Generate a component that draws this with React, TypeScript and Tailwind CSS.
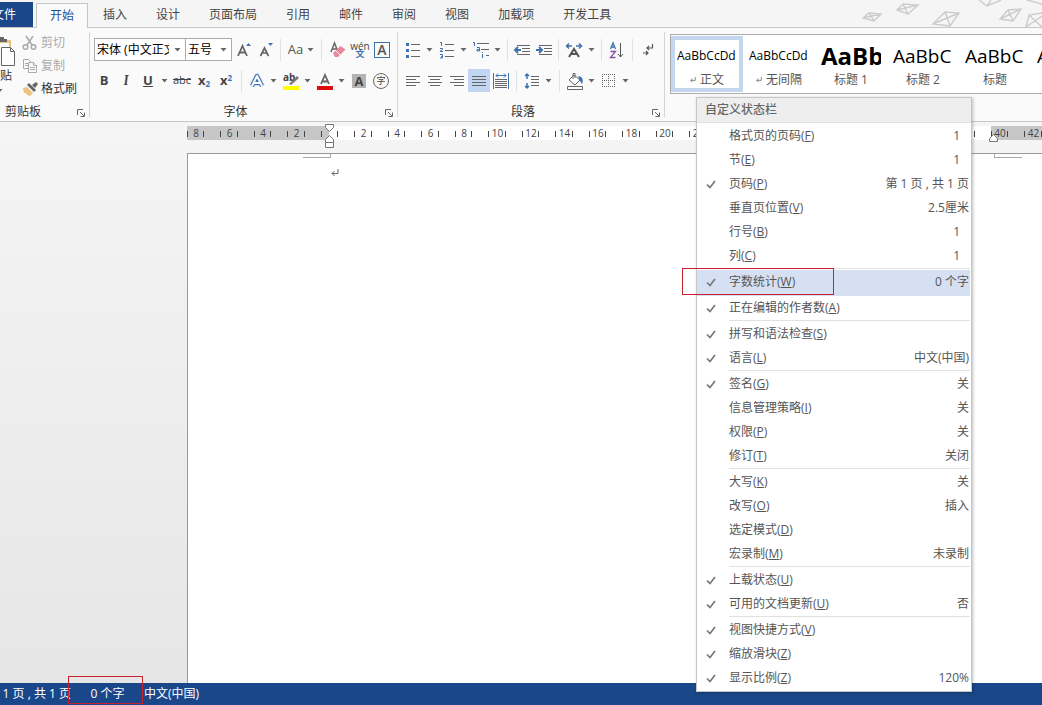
import type { ReactNode } from "react"

const TABS = ["插入", "设计", "页面布局", "引用", "邮件", "审阅", "视图", "加载项", "开发工具"]

type MenuEntry = {
  label: string
  accel: string
  value?: string
  checked?: boolean
  active?: boolean
  divider?: boolean
}

const MENU: MenuEntry[] = [
  { label: "格式页的页码", accel: "F", value: "1" },
  { label: "节", accel: "E", value: "1" },
  { label: "页码", accel: "P", value: "第 1 页 , 共 1 页", checked: true },
  { label: "垂直页位置", accel: "V", value: "2.5厘米" },
  { label: "行号", accel: "B", value: "1" },
  { label: "列", accel: "C", value: "1", divider: true },
  { label: "字数统计", accel: "W", value: "0 个字", checked: true, active: true },
  { label: "正在编辑的作者数", accel: "A", checked: true, divider: true },
  { label: "拼写和语法检查", accel: "S", checked: true },
  { label: "语言", accel: "L", value: "中文(中国)", checked: true, divider: true },
  { label: "签名", accel: "G", value: "关", checked: true },
  { label: "信息管理策略", accel: "I", value: "关" },
  { label: "权限", accel: "P", value: "关" },
  { label: "修订", accel: "T", value: "关闭", divider: true },
  { label: "大写", accel: "K", value: "关" },
  { label: "改写", accel: "O", value: "插入" },
  { label: "选定模式", accel: "D" },
  { label: "宏录制", accel: "M", value: "未录制", divider: true },
  { label: "上载状态", accel: "U", checked: true },
  { label: "可用的文档更新", accel: "U", value: "否", checked: true, divider: true },
  { label: "视图快捷方式", accel: "V", checked: true },
  { label: "缩放滑块", accel: "Z", checked: true },
  { label: "显示比例", accel: "Z", value: "120%", checked: true },
]

const STYLES = [
  { sample: "AaBbCcDd", name: "正文", mark: true, size: "text-[12px]", active: true },
  { sample: "AaBbCcDd", name: "无间隔", mark: true, size: "text-[12px]" },
  { sample: "AaBbCc", name: "标题 1", size: "text-[24px] font-bold" },
  { sample: "AaBbC", name: "标题 2", size: "text-[19px]" },
  { sample: "AaBbC", name: "标题", size: "text-[19px]" },
  { sample: "AaBbC", name: "副标题", size: "text-[19px]" },
]

function Btn({ label, wide, on, children }: { label: string; wide?: boolean; on?: boolean; children: ReactNode }) {
  return (
    <button
      aria-label={label}
      className={`flex h-[23px] shrink-0 items-center justify-center ${wide ? "w-6" : "w-[22px]"} ${on ? "bg-[#c2d5f2]" : ""}`}
    >
      {children}
    </button>
  )
}

function Caret() {
  return (
    <svg width="7" height="4" viewBox="0 0 7 4" fill="#666" aria-hidden="true">
      <path d="M0.5 0h6L3.500 3.500z" />
    </svg>
  )
}

function Drop({ label }: { label: string }) {
  return (
    <button aria-label={label} className="flex h-[23px] w-3 shrink-0 items-center pl-[2px]">
      <Caret />
    </button>
  )
}

function Sep({ wide }: { wide?: boolean }) {
  return <div className={`h-[22px] w-px shrink-0 bg-[#e1e1e1] ${wide ? "mx-1" : "mx-[3px]"}`} />
}

function Launcher({ label }: { label: string }) {
  return (
    <button aria-label={label} className="absolute right-1 bottom-0">
      <svg width="8" height="8" viewBox="0 0 8 8" fill="none" stroke="#666">
        <path d="M0.5 6V0.5H6M3 3l4 4M7.500 3.500v4h-4" />
      </svg>
    </button>
  )
}

function Group({ title, className, children }: { title: string; className: string; children: ReactNode }) {
  return (
    <section aria-label={title} className={`relative my-1 flex shrink-0 flex-col border-r border-[#d4d4d4] pt-[6px] ${className}`}>
      {children}
      <div className="absolute inset-x-0 -bottom-[2px] pr-4 text-center leading-[14px] text-[#333]">{title}</div>
      <Launcher label={title + "选项"} />
    </section>
  )
}

function Lines({ rows }: { rows: [number, number][] }) {
  return (
    <svg width="16" height="16" viewBox="0 0 16 16" stroke="#666">
      {rows.map(([from, to], i) => (
        <path key={i} d={`M${from} ${3.5 + i * 3}H${to}`} />
      ))}
    </svg>
  )
}

function Clipboard() {
  return (
    <section aria-label="剪贴板" className="relative my-1 w-[90px] shrink-0 border-r border-[#d4d4d4]">
      <div className="flex">
        <button className="flex w-[22px] flex-col items-start pt-[3px]">
          <svg width="16" height="32" viewBox="0 0 16 32" fill="none">
            <path d="M0 5h11v7H9V8H0z" fill="#eac282" />
            <path d="M0 2h4v2h3v3H0z" fill="#666" />
            <path d="M1.500 12.500h9l4 4v14h-13z" fill="#fff" stroke="#666" />
            <path d="M10.500 12.500v4h4" stroke="#666" />
          </svg>
          <span className="mb-1 leading-[18px] text-[#333]">贴</span>
          <span className="-ml-1 flex"><Caret /></span>
        </button>
        <div className="-mt-px flex flex-col text-[#aaa]">
          <button className="flex h-[23px] items-center gap-[3px]">
            <svg width="16" height="16" viewBox="0 0 16 16" fill="none" stroke="#aaa" strokeWidth="1.500">
              <path d="M4 1l6 9M11 1L5 10" />
              <circle cx="3.500" cy="12" r="2.300" />
              <circle cx="11.500" cy="12" r="2.300" />
            </svg>
            剪切
          </button>
          <button className="flex h-[23px] items-center gap-[3px]">
            <svg width="16" height="16" viewBox="0 0 16 16" fill="#fafafa" stroke="#aaa">
              <path d="M1.500 1.500h5l2 2v7h-7zM3 5.500h3M3 7.500h3" />
              <path d="M6.500 4.500h5l3 3v7h-8z" />
              <path d="M11.500 4.500v3h3M8 9.500h5M8 11.500h5" />
            </svg>
            复制
          </button>
          <button className="flex h-[23px] items-center gap-[3px] text-[#333]">
            <svg width="16" height="16" viewBox="0 0 16 16">
              <path d="M1 7l4-1 6 6-3 3-3-1-1-2-2 0z" fill="#eac282" />
              <path d="M5 4l2-2 7 7-2 2z" fill="#666" />
              <path d="M10 4l4-3 2 2-3 4z" fill="#666" />
            </svg>
            格式刷
          </button>
        </div>
      </div>
      <div className="absolute -bottom-[2px] left-[5px] leading-[14px] text-[#333]">剪贴板</div>
      <Launcher label="剪贴板选项" />
    </section>
  )
}

function Combo({ label, value, className }: { label: string; value: string; className: string }) {
  return (
    <div className={`relative h-[23px] shrink-0 border border-[#ababab] bg-white ${className}`}>
      <select aria-label={label} className="h-full w-full appearance-none overflow-hidden pt-px pr-4 pl-[2px] text-[12px] text-black outline-none">
        <option>{value}</option>
      </select>
      <div className="pointer-events-none absolute top-[9px] right-1 flex">
        <Caret />
      </div>
    </div>
  )
}

function FontGroup() {
  return (
    <Group title="字体" className="w-[308px] pl-[3px]">
      <div className="flex h-[23px] items-center pl-px">
        <Combo label="字体" value="宋体 (中文正文)" className="w-[92px]" />
        <Combo label="字号" value="五号" className="-ml-px w-[47px]" />
        <div className="w-px" />
        <Btn label="增大字号">
          <svg width="18" height="18" viewBox="0 0 18 18" fill="none" stroke="#666" strokeWidth="1.800">
            <path d="M3 15L7.500 5 12 15M4.500 11.500h6" />
            <path d="M11 5l2.500-3L16 5z" fill="#4472b0" stroke="none" />
          </svg>
        </Btn>
        <Btn label="减小字号">
          <svg width="18" height="18" viewBox="0 0 18 18" fill="none" stroke="#666" strokeWidth="1.700">
            <path d="M3.500 15L7.500 7l4 8M5 12h5" />
            <path d="M11 2h5l-2.500 3z" fill="#4472b0" stroke="none" />
          </svg>
        </Btn>
        <Sep />
        <button aria-label="更改大小写" className="flex h-[23px] w-[34px] items-center justify-center gap-1 text-[13px] text-[#555]">
          Aa <Caret />
        </button>
        <Sep />
        <div className="w-[2px]" />
        <Btn label="清除格式">
          <svg width="18" height="18" viewBox="0 0 18 18" fill="none">
            <path d="M2 11L5.500 2 9 11M3.500 8h4" stroke="#666" strokeWidth="1.500" />
            <path d="M4 12l7.500-7 5 3.500-7.500 7.500H6z" fill="#e8879c" />
            <path d="M6.500 9.500l4.500 4.500" stroke="#fafafa" />
          </svg>
        </Btn>
        <Btn label="拼音指南">
          <span className="flex flex-col items-center text-[10px] leading-[8px] text-[#444]">
            <span>wén</span>
            <span className="text-[9px] font-bold text-[#3d72ad]">文</span>
          </span>
        </Btn>
        <Btn label="字符边框">
          <span className="flex h-4 w-4 items-center justify-center border border-[#3d72ad] text-[14px] leading-[14px] font-semibold text-[#555]">A</span>
        </Btn>
      </div>
      <div className="mt-2 flex h-[23px] items-center text-[13px] text-[#444]">
        <Btn label="加粗"><b>B</b></Btn>
        <Btn label="倾斜"><b className="font-serif italic">I</b></Btn>
        <Btn label="下划线"><b className="underline">U</b></Btn>
        <Drop label="下划线样式" />
        <Btn label="删除线"><span className="text-[11px] line-through">abc</span></Btn>
        <Btn label="下标"><b>x<sub className="text-[8px] text-[#3d72ad]">2</sub></b></Btn>
        <Btn label="上标"><b>x<sup className="text-[8px] text-[#3d72ad]">2</sup></b></Btn>
        <Sep wide />
        <Btn label="文本效果">
          <svg width="18" height="18" viewBox="0 0 18 18" fill="none" strokeLinejoin="round">
            <path d="M4 14L9 4l5 10M6 11h6" stroke="#cfe0f4" strokeWidth="6" />
            <path d="M4 14L9 4l5 10M6 11h6" stroke="#3d72ad" strokeWidth="4" />
            <path d="M4 14L9 4l5 10M6 11h6" stroke="#fff" strokeWidth="2" />
          </svg>
        </Btn>
        <Drop label="文本效果选项" />
        <Btn label="突出显示">
          <svg width="18" height="18" viewBox="0 0 18 18" fill="none">
            <text x="1" y="9" fontSize="10" fontWeight="bold" fill="#444">ab</text>
            <path d="M7 12l8-8 2 2-8 7z" fill="#777" />
            <path d="M1 14h16v4H1z" fill="#ffff00" />
          </svg>
        </Btn>
        <Drop label="突出显示颜色" />
        <Btn label="字体颜色">
          <svg width="18" height="18" viewBox="0 0 18 18" fill="none">
            <path d="M5 12L9 3l4 9M6 9.500h6" stroke="#666" strokeWidth="1.800" />
            <path d="M1 14h16v4H1z" fill="#e20b0b" />
          </svg>
        </Btn>
        <Drop label="字体颜色选项" />
        <Btn label="字符底纹">
          <b className="flex h-[14px] w-[14px] items-center justify-center bg-[#b3b3b3] leading-[14px]">A</b>
        </Btn>
        <Btn label="带圈字符">
          <span className="flex h-4 w-4 items-center justify-center rounded-full border border-[#666] text-[9px] leading-none">字</span>
        </Btn>
      </div>
    </Group>
  )
}

function ParagraphGroup() {
  return (
    <Group title="段落" className="w-[267px] pl-1">
      <div className="flex h-[23px] items-center">
        <Btn label="项目符号">
          <svg width="16" height="18" viewBox="0 0 16 18" stroke="#666">
            <path d="M6 3.500h9M6 9.500h9M6 15.500h9" />
            <path d="M1 2h3v3H1zM1 8h3v3H1zM1 14h3v3H1z" fill="#3d72ad" stroke="none" />
          </svg>
        </Btn>
        <Drop label="项目符号库" />
        <Btn label="编号">
          <svg width="16" height="18" viewBox="0 0 16 18" stroke="#666">
            <path d="M6 3.500h9M6 9.500h9M6 15.500h9" />
            <path d="M1 1.500h1.500V5M1 7.500h2.500v1L1 10.500h3M1 13.500h2.500V17H1M2 15.500h1.500" fill="none" stroke="#3d72ad" />
          </svg>
        </Btn>
        <Drop label="编号库" />
        <Btn label="多级列表">
          <svg width="18" height="18" viewBox="0 0 18 18" stroke="#666" fill="none">
            <path d="M5 2.500h12M9 8.500h8M14 14.500h3" />
            <path d="M1 1.500h1.500V5M5 6.500h2.500V10H5V8.500h2M10.500 11v1M10.500 13v4" stroke="#3d72ad" />
          </svg>
        </Btn>
        <Drop label="多级列表库" />
        <Sep />
        <Btn label="减少缩进量">
          <svg width="18" height="16" viewBox="0 0 18 16" stroke="#666" fill="none">
            <path d="M4 3.500h13M9 6.500h8M9 9.500h8M4 12.500h13" />
            <path d="M2 8h6M5 5L2 8l3 3" stroke="#3d72ad" strokeWidth="2" />
          </svg>
        </Btn>
        <Btn label="增加缩进量">
          <svg width="18" height="16" viewBox="0 0 18 16" stroke="#666" fill="none">
            <path d="M4 3.500h13M9 6.500h8M9 9.500h8M4 12.500h13" />
            <path d="M1 8h6M4 5l3 3-3 3" stroke="#3d72ad" strokeWidth="2" />
          </svg>
        </Btn>
        <Sep />
        <Btn label="中文版式" wide>
          <svg width="18" height="16" viewBox="0 0 18 16" fill="none">
            <path d="M4 15l5-8 5 8M6 12h6" stroke="#555" strokeWidth="2" />
            <path d="M7 4H2M4 1.500L1.500 4 4 6.500M11 4h5M14 1.500L16.500 4 14 6.500" stroke="#3d72ad" strokeWidth="1.500" />
          </svg>
        </Btn>
        <Drop label="中文版式选项" />
        <Sep />
        <Btn label="排序" wide>
          <svg width="16" height="18" viewBox="0 0 16 18" fill="none">
            <path d="M1.500 8L4 2l2.500 6M2.500 6h3" stroke="#3d72ad" strokeWidth="1.300" />
            <path d="M1.500 10.500h5l-5 6h5" stroke="#8a4fa8" strokeWidth="1.300" />
            <path d="M11.500 2v14M9 13l2.500 3 2.500-3" stroke="#555" />
          </svg>
        </Btn>
        <Sep />
        <Btn label="显示编辑标记" wide>
          <svg width="14" height="16" viewBox="0 0 14 16" fill="none" stroke="#555" strokeWidth="1.200">
            <path d="M11.500 2v4H6M8 4L6 6l2 2M2 11h5M5 9l2 2-2 2" />
          </svg>
        </Btn>
      </div>
      <div className="mt-2 flex h-[23px] items-center">
        <Btn label="左对齐"><Lines rows={[[1, 15], [1, 11], [1, 15], [1, 11]]} /></Btn>
        <Btn label="居中"><Lines rows={[[1, 15], [3, 13], [1, 15], [3, 13]]} /></Btn>
        <Btn label="右对齐"><Lines rows={[[1, 15], [5, 15], [1, 15], [5, 15]]} /></Btn>
        <Btn label="两端对齐" on><Lines rows={[[1, 15], [1, 15], [1, 15], [1, 15]]} /></Btn>
        <Btn label="分散对齐">
          <svg width="16" height="18" viewBox="0 0 16 18" fill="none" stroke="#666">
            <path d="M2 7.500h12M2 9.500h12M2 11.500h12M2 13.500h12M2 15.500h12" />
            <path d="M0.500 1v16M15.500 1v16M3 3.500h10M5 1.500l-2 2 2 2M11 1.500l2 2-2 2" stroke="#3d72ad" />
          </svg>
        </Btn>
        <Sep wide />
        <Btn label="行距">
          <svg width="16" height="18" viewBox="0 0 16 18" fill="none" stroke="#666">
            <path d="M7 4.500h8M7 7.500h8M7 10.500h8M7 13.500h8" />
            <path d="M3 2v5M1 4l2-2 2 2M3 11v5M1 14l2 2 2-2" stroke="#3d72ad" strokeWidth="1.500" />
          </svg>
        </Btn>
        <Drop label="行距选项" />
        <Sep wide />
        <Btn label="底纹">
          <svg width="18" height="18" viewBox="0 0 18 18" fill="none" stroke="#666">
            <path d="M8 3l6 5-5 5-6-5zM7 7V1.500h2V6" fill="#fff" />
            <path d="M12 4c4 0 6 4 4 8l-2-3z" fill="#3d72ad" stroke="none" />
            <path d="M1.500 14.500h15v3h-15z" fill="#fff" />
          </svg>
        </Btn>
        <Drop label="底纹颜色" />
        <Btn label="边框">
          <svg width="14" height="14" viewBox="0 0 14 14" fill="none" stroke="#666">
            <path d="M0 0.500h13M0 6.500h13M0 12.500h13M0.500 0v13M6.500 0v13M12.500 0v13" strokeDasharray="1 1" />
          </svg>
        </Btn>
        <Drop label="边框选项" />
      </div>
    </Group>
  )
}

function StyleGallery() {
  return (
    <section aria-label="样式" className="min-w-0 flex-1 pt-[6px] pl-[5px]">
      <div className="flex h-[60px] overflow-hidden border border-r-0 border-[#ababab] bg-white">
        {STYLES.map((s, i) => (
          <button
            key={i}
            className={`my-px flex w-[72px] shrink-0 flex-col items-center border-4 ${s.active ? "border-[#c5d6f0]" : "border-transparent"}`}
          >
            <span className={`flex h-8 w-[60px] shrink-0 items-center overflow-hidden leading-8 whitespace-nowrap text-black ${s.size}`}>
              {s.sample}
            </span>
            <span className="flex items-center gap-1 leading-[16px] whitespace-nowrap text-[#555]">
              {s.mark && <ReturnMark small />}
              {s.name}
            </span>
          </button>
        ))}
      </div>
    </section>
  )
}

function ReturnMark({ small }: { small?: boolean }) {
  return (
    <svg width={small ? 6 : 8} height={small ? 6 : 8} viewBox="0 0 8 8" fill="none" stroke="#666" aria-hidden="true">
      <path d="M7 0v4.500H1M3.500 2L1 4.500 3.500 7" />
    </svg>
  )
}

// One character unit is 16.75px; numbers sit on the even units, ticks on the halves
function Ruler() {
  const unit = 16.75
  const origin = 142
  const cells = Array.from({ length: 60 }, (_, i) => i - 8)
  return (
    <div className="relative ml-[187px] flex h-[14px]">
      <div className="w-[142px] bg-[#c6c6c6]" />
      <div className="w-[662px] bg-white" />
      <div className="flex-1 bg-[#c6c6c6]" />
      <svg className="absolute inset-0 h-full w-full" fontSize="10" fill="#444" textAnchor="middle">
        {cells.map(n => (
          <g key={n}>
            <path d={`M${Math.round(origin + (n - 0.5) * unit) + 0.5} 5v6`} stroke="#444" />
            {n !== 0 && n % 2 === 0 && (
              <text x={origin + 1 + n * unit} y="11">{Math.abs(n)}</text>
            )}
          </g>
        ))}
      </svg>
      <svg className="absolute -top-[2px] left-[137px]" width="11" height="25" viewBox="0 0 11 25" fill="#fff" stroke="#777">
        <path d="M1.500 0.500h8v3l-4 4-4-4zM5.500 11.500l4 4v3h-8v-3zM1.500 18.500h8v5h-8z" />
      </svg>
      <svg className="absolute top-[8px] left-[801px]" width="11" height="9" viewBox="0 0 11 9" fill="#fff" stroke="#777">
        <path d="M5.500 0.500l4 4v3h-8v-3z" />
      </svg>
    </div>
  )
}

function StatusMenu() {
  return (
    <div role="menu" className="absolute right-[70px] bottom-[13px] w-[276px] border border-[#c6c6c6] bg-white pb-px text-[#555] shadow-[1px_1px_3px_rgba(0,0,0,0.25)]">
      <div className="mb-px h-[25px] border-b border-[#e1e1e1] bg-[#eee] pl-2 leading-6 font-medium text-[#666]">自定义状态栏</div>
      {MENU.map(item => (
        <div key={item.label} className={item.active ? "relative mr-px bg-[#d5e1f2] pb-[2px]" : "mr-px"}>
          <button role="menuitemcheckbox" aria-checked={!!item.checked} className="flex h-6 w-full items-center pr-px">
            <span className="flex w-8 shrink-0 pl-[9px]">
              {item.checked && (
                <svg width="10" height="9" viewBox="0 0 10 9" fill="none" stroke="#777" strokeWidth="1.700">
                  <path d="M1 4.500l3 3L9 1" />
                </svg>
              )}
            </span>
            <span className="flex-1 text-left">
              {item.label}(<u>{item.accel}</u>)
            </span>
            <span className={item.value === "1" ? "pr-[9px]" : ""}>{item.value}</span>
          </button>
          {item.divider && <div className="ml-8 h-[2px] border-t border-[#e1e1e1]" />}
          {item.active && <div className="absolute -top-[2px] -left-[15px] h-[27px] w-[152px] border border-[#c8202f]" />}
        </div>
      ))}
    </div>
  )
}

export default function App() {
  return (
    <div className="relative flex h-screen flex-col overflow-hidden bg-[#f5f5f5] font-['Open_Sans','Noto_Sans_CJK_SC',sans-serif] text-[12px] text-[#444]">
      <nav className="relative flex h-7 shrink-0 items-end gap-px border-b border-[#c6c6c6]">
        <svg className="absolute right-0 bottom-0" width="187" height="27" viewBox="0 0 187 27" fill="none" stroke="#ccc" strokeWidth="1.400">
          <path d="M8 18l6-5 12 1-7 7zM8 18l18-4M14 13l5 8M42 10l6-6 15 1-10 9zM42 10l21-5M48 4l5 10M78 24l12-12 14 1-9 13zM78 24l26-11M90 12l5 14M124 0l8 6 14-6M132 6l4-6M145 19l8-9 13-1-8 12zM145 19l21-10M153 10l5 11M171 27l3-12 13-2M174 15l13 12M171 27l16-11M172 0l15 4" />
        </svg>
        <button className="relative flex h-[25px] w-[33px] items-center justify-end overflow-hidden bg-[#1a4789] pr-[17px] whitespace-nowrap text-white">
          文件
        </button>
        <button className="relative -mb-px ml-[2px] h-[25px] border border-b-0 border-[#c6c6c6] bg-[#fafafa] px-[13px] text-[#1f4f96]">开始</button>
        {TABS.map(tab => (
          <button key={tab} className="relative h-[25px] px-[14px]">{tab}</button>
        ))}
      </nav>

      <div className="flex h-[94px] shrink-0 border-b border-[#c6c6c6] bg-[#fafafa]">
        <Clipboard />
        <FontGroup />
        <ParagraphGroup />
        <StyleGallery />
      </div>

      <main className="flex min-h-0 flex-1 flex-col bg-linear-to-b from-[#f5f5f5] to-[#e6e6e6] pt-1">
        <Ruler />
        <div className="relative mt-[13px] ml-[187px] flex-1 border-t border-l border-[#999] bg-white">
          <div className="absolute top-0 left-[115px] h-1 w-7 border-r border-b border-[#aaa]" />
          <div className="absolute top-0 left-[806px] h-1 w-7 border-b border-l border-[#aaa]" />
          <div className="pt-[15px] pl-[143px]">
            <ReturnMark />
          </div>
        </div>
      </main>

      <footer className="flex h-[22px] shrink-0 items-center bg-[#1a4789] whitespace-nowrap text-white">
        <div className="flex w-[71px] justify-end overflow-hidden">第 1 页 , 共 1 页</div>
        <div className="relative flex h-full w-[73px] items-center justify-center">
          0 个字
          <div className="absolute -top-[7px] -left-[3px] h-7 w-[75px] border border-[#c8202f]" />
        </div>
        <div>中文(中国)</div>
      </footer>

      <StatusMenu />
    </div>
  )
}
